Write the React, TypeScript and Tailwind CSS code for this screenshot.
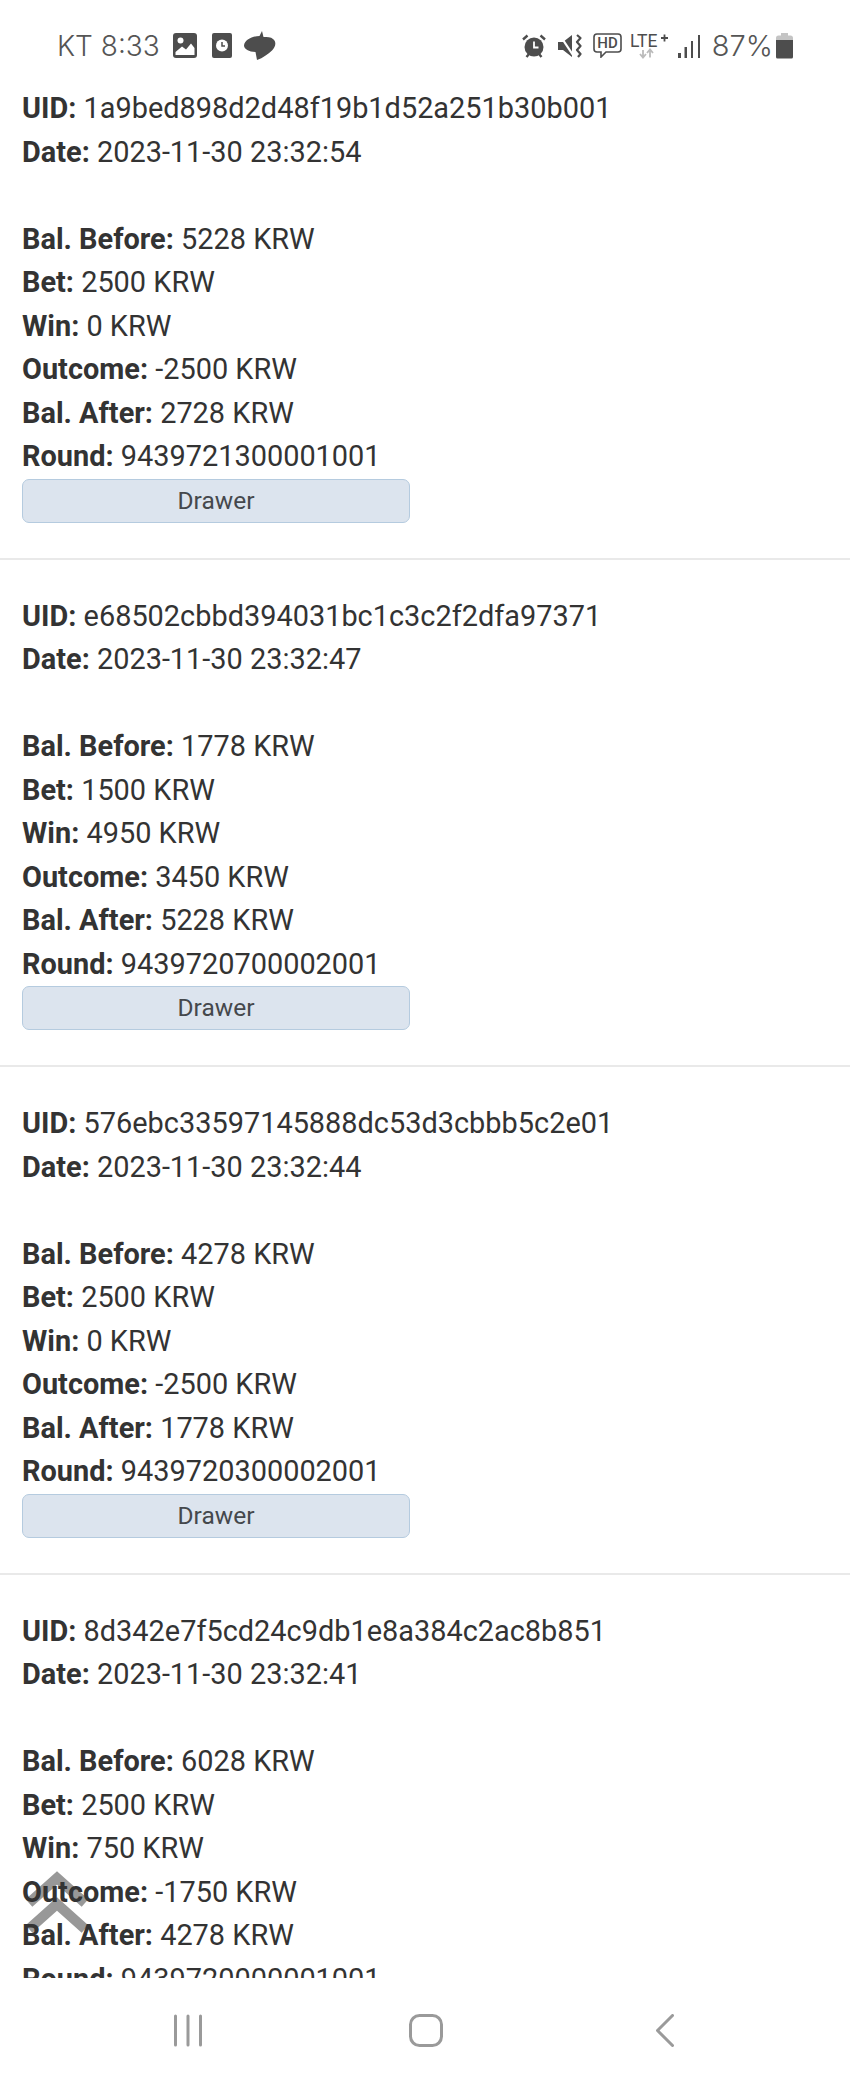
import React from "react";

type Rec = { uid: string; date: string; before: string; bet: string; win: string; outcome: string; after: string; round: string };

const records: Rec[] = [
  { uid: "1a9bed898d2d48f19b1d52a251b30b001", date: "2023-11-30 23:32:54", before: "5228", bet: "2500", win: "0", outcome: "-2500", after: "2728", round: "9439721300001001" },
  { uid: "e68502cbbd394031bc1c3c2f2dfa97371", date: "2023-11-30 23:32:47", before: "1778", bet: "1500", win: "4950", outcome: "3450", after: "5228", round: "9439720700002001" },
  { uid: "576ebc33597145888dc53d3cbbb5c2e01", date: "2023-11-30 23:32:44", before: "4278", bet: "2500", win: "0", outcome: "-2500", after: "1778", round: "9439720300002001" },
  { uid: "8d342e7f5cd24c9db1e8a384c2ac8b851", date: "2023-11-30 23:32:41", before: "6028", bet: "2500", win: "750", outcome: "-1750", after: "4278", round: "9439720000001001" },
];

function Line({ label, value }: { label: string; value: string }) {
  return (
    <div className="h-[43.5px] whitespace-nowrap">
      <b className="font-bold">{label}:</b> {value}
    </div>
  );
}

function Card({ r, first }: { r: Rec; first: boolean }) {
  return (
    <div className={first ? "pl-[22px] pb-[35px] border-b-2 border-[#e9e9e9]" : "pl-[22px] pt-[35px] pb-[35px] border-b-2 border-[#e9e9e9]"}>
      <Line label="UID" value={r.uid} />
      <Line label="Date" value={r.date} />
      <div className="h-[43.5px]" />
      <Line label="Bal. Before" value={`${r.before} KRW`} />
      <Line label="Bet" value={`${r.bet} KRW`} />
      <Line label="Win" value={`${r.win} KRW`} />
      <Line label="Outcome" value={`${r.outcome} KRW`} />
      <Line label="Bal. After" value={`${r.after} KRW`} />
      <Line label="Round" value={r.round} />
      <button className="block w-[388px] h-[44px] rounded-[7px] bg-[#dce4ee] border border-[#b5cbdf] text-[24.5px] leading-[40px] text-[#45484c] text-center">
        Drawer
      </button>
    </div>
  );
}

function StatusBar() {
  return (
    <div className="h-[86px] shrink-0 flex items-center justify-between pl-[57px] pr-[57px] pt-[5px] text-[#555555] font-['Inter',sans-serif]">
      <div className="flex items-center">
        <span className="text-[28px] leading-none font-light">KT 8:33</span>
        <svg width="24" height="25" viewBox="0 0 24 25" className="ml-[13px]">
          <rect x="0" y="0" width="24" height="25" rx="3" fill="#4d4d4d" />
          <circle cx="7.500" cy="7.500" r="3" fill="#fff" />
          <path d="M2.500 19 L9 13.500 L13 16.500 L18 10.500 L21.500 15 V22 H2.500 Z" fill="#fff" />
        </svg>
        <svg width="20" height="25" viewBox="0 0 20 25" className="ml-[15px]">
          <rect x="0" y="0" width="20" height="25" rx="2" fill="#4d4d4d" />
          <circle cx="10" cy="12.500" r="6" fill="#fff" />
          <path d="M10 9 V13 H13" stroke="#4d4d4d" strokeWidth="1.500" fill="none" />
        </svg>
        <svg width="32" height="29" viewBox="0 0 32 29" className="ml-[12px]">
          <path d="M18 0 L15.500 5 C8 5 0.500 9 0 14.500 C0 18 5 21 11.500 21 L13 29 C19 27 24 23 28 19.500 C32 15.500 32.500 10.500 29 8 C27 6 23 6 19.500 6 Z" fill="#4d4d4d" />
        </svg>
      </div>
      <div className="flex items-center">
        <svg width="24" height="24" viewBox="0 0 24 24">
          <circle cx="12" cy="13" r="9.500" fill="#4d4d4d" />
          <path d="M12 7.500 V13.500 H16.500" stroke="#fff" strokeWidth="1.800" fill="none" />
          <path d="M1 5.500 L5.500 1.500 M23 5.500 L18.500 1.500 M4.500 23 L7 20 M19.500 23 L17 20" stroke="#4d4d4d" strokeWidth="2.400" fill="none" />
        </svg>
        <svg width="24" height="24" viewBox="0 0 24 24" className="ml-[12px]">
          <path d="M0 8 H5 L14 1 V23 L5 16 H0 Z" fill="#4d4d4d" />
          <path d="M1 0 L17 24" stroke="#fff" strokeWidth="2.200" />
          <path d="M19 1 L22.500 4 L19 8 L22.500 12 L19 16 L22.500 20 L20 23" stroke="#4d4d4d" strokeWidth="2.200" strokeLinejoin="round" fill="none" />
        </svg>
        <svg width="29" height="25" viewBox="0 0 29 25" className="ml-[11px]">
          <path d="M4 1 H25 Q28 1 28 4 V16 Q28 19 25 19 H13 L8 24 V19 H4 Q1 19 1 16 V4 Q1 1 4 1 Z" stroke="#4d4d4d" strokeWidth="1.600" fill="none" />
          <text x="14.500" y="15" textAnchor="middle" fontSize="15" fontWeight="500" fill="#4d4d4d" fontFamily="Roboto, sans-serif">HD</text>
        </svg>
        <svg width="39" height="25" viewBox="0 0 39 25" className="ml-[8px] overflow-visible">
          <text x="0" y="13.500" fontSize="17.500" fontWeight="400" fill="#4d4d4d" fontFamily="Roboto, sans-serif">LTE</text>
          <path d="M34.500 1.500 V8.500 M31 5 H38" stroke="#4d4d4d" strokeWidth="1.800" fill="none" />
          <path d="M13 17 V24 M10 21 L13 24.500 L16 21 M20 24.500 V17 M17 20 L20 16.500 L23 20" stroke="#bbbbbb" strokeWidth="1.800" fill="none" />
        </svg>
        <svg width="22" height="24" viewBox="0 0 22 24" className="ml-[9px]">
          <rect x="0" y="19" width="3" height="5" fill="#4d4d4d" />
          <rect x="6.500" y="13" width="2.500" height="11" fill="#4d4d4d" />
          <rect x="13" y="7" width="2" height="17" fill="#4d4d4d" />
          <rect x="20" y="1" width="2" height="23" fill="#4d4d4d" />
        </svg>
        <span className="ml-[12px] text-[29px] leading-none font-light">87%</span>
        <svg width="17" height="26" viewBox="0 0 17 26" className="ml-[3px]">
          <path d="M5 0 H12 V2.500 H14.500 Q17 2.500 17 5 V7 H0 V5 Q0 2.500 2.500 2.500 H5 Z" fill="#c4c4c4" />
          <path d="M0 7 H17 V24 Q17 25.500 15.500 25.500 H1.500 Q0 25.500 0 24 Z" fill="#4d4d4d" />
        </svg>
      </div>
    </div>
  );
}

function NavBar() {
  return (
    <div className="h-[100px] shrink-0 flex items-start pt-[36px] pl-[174px]">
      <svg width="28" height="33" viewBox="0 0 28 33">
        <path d="M1.500 2 V31 M14 2 V31 M26.500 2 V31" stroke="#9a9a9a" strokeWidth="3" strokeLinecap="round" fill="none" />
      </svg>
      <svg width="34" height="33" viewBox="0 0 34 33" className="ml-[207px]">
        <rect x="1.500" y="1.500" width="31" height="30" rx="9" stroke="#9a9a9a" strokeWidth="3" fill="none" />
      </svg>
      <svg width="18" height="33" viewBox="0 0 18 33" className="ml-[213px]">
        <path d="M16.500 1.500 L1.500 16.500 L16.500 31.500" stroke="#9a9a9a" strokeWidth="3" strokeLinecap="round" strokeLinejoin="round" fill="none" />
      </svg>
    </div>
  );
}

export default function App() {
  return (
    <div className="w-[850px] h-[2078px] bg-white flex flex-col overflow-hidden font-['Roboto',sans-serif]">
      <StatusBar />
      <div className="relative flex-1 min-h-0">
        <div className="h-full overflow-hidden pt-[1px] text-[28.9px] leading-[43.5px] text-[#333333]">
          {records.map((r, i) => (
            <Card key={r.uid} r={r} first={i === 0} />
          ))}
        </div>
        <svg width="66" height="62" viewBox="0 0 66 62" className="absolute left-[24px] top-[1785px] opacity-50 pointer-events-none">
          <path d="M5 32 L33 7 L61 32" stroke="#333333" strokeWidth="10" fill="none" />
          <path d="M5 58 L33 33 L61 58" stroke="#333333" strokeWidth="10" fill="none" />
        </svg>
      </div>
      <NavBar />
    </div>
  );
}
